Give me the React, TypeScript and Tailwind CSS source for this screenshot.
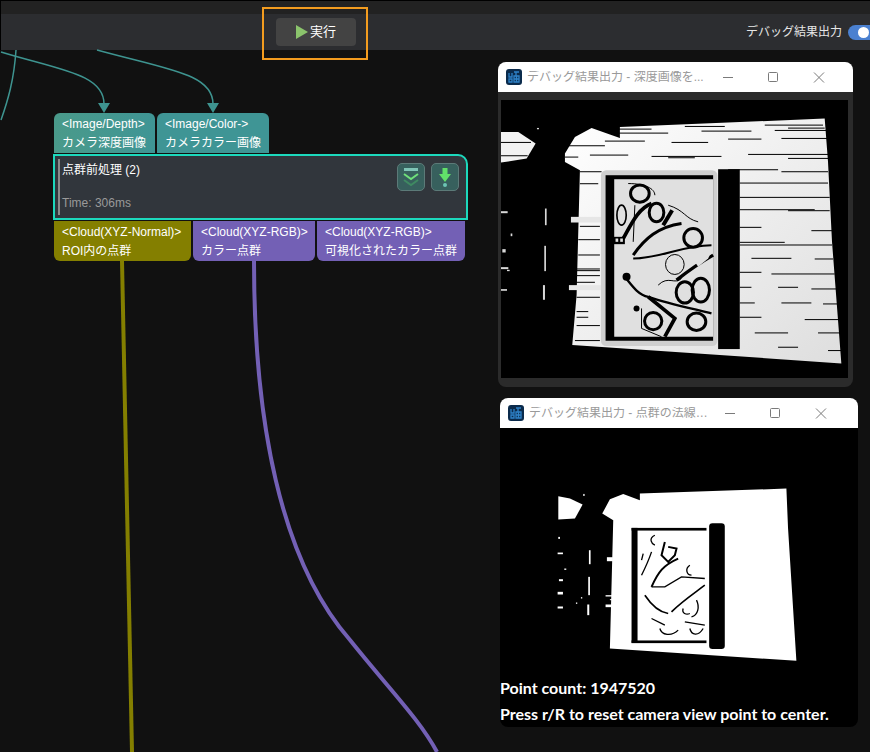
const cjk = "font-['Liberation_Sans','Noto_Sans_CJK_JP',sans-serif]";

// [x1, x2, y] in the crop's own coordinates
const depthLines: number[][] = [
  [372, 470, 100], [570, 690, 92], [810, 985, 88], [880, 990, 97], [372, 520, 112], [620, 770, 106], [840, 995, 104],
  [330, 450, 136], [530, 640, 140], [700, 800, 130], [860, 1000, 128], [210, 330, 150], [285, 400, 178], [470, 680, 182],
  [760, 1000, 176], [210, 250, 184], [520, 600, 186], [880, 1002, 188], [255, 320, 228], [700, 850, 222], [860, 1000, 228],
  [735, 1000, 262], [255, 310, 264], [735, 1005, 305], [735, 960, 342], [880, 1005, 345], [735, 800, 395], [950, 1012, 405],
  [255, 315, 392], [735, 870, 440], [735, 1012, 448], [250, 315, 432], [250, 315, 478], [770, 890, 488], [960, 1015, 490],
  [735, 800, 530], [830, 1020, 535], [245, 315, 520], [245, 315, 540], [735, 770, 575], [850, 910, 575], [950, 1025, 580],
  [245, 315, 605], [735, 780, 622], [860, 950, 622], [985, 1030, 625], [245, 280, 648], [245, 280, 665], [735, 800, 665],
  [930, 1035, 672], [245, 315, 690], [780, 880, 712], [970, 1035, 712], [240, 315, 735], [850, 910, 755], [1000, 1040, 765],
  [220, 315, 525], [222, 300, 560],
];

const specks: number[][] = [
  [18, 348, 20, 6], [47, 415, 5, 8], [22, 462, 10, 10], [18, 516, 22, 6], [36, 524, 8, 4], [18, 582, 18, 5],
  [150, 340, 5, 50], [148, 452, 5, 76], [144, 570, 6, 44], [126, 98, 6, 4],
];

const normalSpecks: number[][] = [
  [190, 425, 5, 6], [188, 472, 16, 5], [208, 520, 6, 4], [192, 552, 12, 6], [188, 590, 16, 8], [188, 634, 16, 6],
  [282, 465, 5, 42], [280, 545, 5, 55], [277, 628, 6, 32], [243, 622, 4, 4], [265, 296, 4, 6], [258, 606, 4, 4],
  [336, 486, 18, 12], [362, 497, 40, 2], [332, 600, 66, 4], [345, 612, 50, 3], [332, 628, 68, 8],
];

function DepthImage() {
  return (
    <svg viewBox="18 15 1042 833" className="block h-[278px] w-[347px] bg-black">
      <defs>
        <linearGradient id="wall" x1="0" y1="0" x2="1" y2="1">
          <stop offset="0" stopColor="#ffffff" />
          <stop offset="1" stopColor="#dedede" />
        </linearGradient>
      </defs>
      <polygon fill="url(#wall)" points="375,95 990,70 1000,200 1012,440 1040,805 232,750 245,600 255,225 210,200 210,175 240,125 290,98 345,118 375,128" />
      <polygon fill="#f2f2f2" points="18,110 70,110 122,145 95,190 18,202" />
      <rect x="18" y="140" width="90" height="3" fill="#000" />
      <rect x="18" y="180" width="80" height="3" fill="#000" />
      <rect x="228" y="365" width="90" height="17" fill="#e6e6e6" />
      <rect x="222" y="570" width="96" height="15" fill="#e6e6e6" />
      <rect x="670" y="222" width="65" height="540" fill="#000" />
      {depthLines.map(([a, b, y]) => (
        <rect key={`${a}-${y}`} x={a} y={y} width={b - a} height="3" fill="#000" />
      ))}
      {specks.map(([x, y, w, h]) => (
        <rect key={`${x}-${y}`} x={x} y={y} width={w} height={h} fill="#d8d8d8" />
      ))}
      <rect x="318" y="225" width="350" height="528" rx="16" fill="#cfcfcf" />
      <rect x="332" y="240" width="323" height="497" fill="#000" />
      <rect x="358" y="252" width="297" height="473" fill="#e0e0e0" />
      <g fill="none" stroke="#000">
        <g strokeWidth="9">
          <ellipse cx="435" cy="295" rx="28" ry="26" />
          <ellipse cx="485" cy="352" rx="22" ry="28" />
          <ellipse cx="595" cy="428" rx="28" ry="28" />
          <ellipse cx="570" cy="592" rx="26" ry="32" />
          <ellipse cx="618" cy="585" rx="26" ry="36" />
          <ellipse cx="475" cy="678" rx="26" ry="26" />
          <ellipse cx="605" cy="680" rx="28" ry="26" />
        </g>
        <ellipse cx="540" cy="508" rx="28" ry="30" strokeWidth="3" />
        <ellipse cx="380" cy="360" rx="14" ry="30" strokeWidth="5" />
        <path strokeWidth="11" d="M385 430 C 410 385 430 340 470 325" />
        <path strokeWidth="12" d="M505 390 L 532 345" />
        <path strokeWidth="9" d="M415 480 C 450 430 490 395 560 385" />
        <path strokeWidth="6" d="M415 490 C 500 490 560 450 650 450" />
        <path strokeWidth="7" d="M390 545 C 410 570 430 600 460 605 C 520 625 590 640 650 655" />
        <path strokeWidth="11" d="M460 605 L 540 670 L 510 725" />
        <path strokeWidth="10" d="M545 555 C 590 520 620 500 655 480" />
        <path strokeWidth="3" d="M400 265 C 450 265 480 280 480 300 M420 330 L 415 440 M520 330 C 570 345 570 370 610 380 M490 570 C 520 540 540 570 560 550 M440 640 L 440 700 L 500 725" />
      </g>
      <circle cx="395" cy="545" r="12" fill="#000" />
      <circle cx="425" cy="640" r="9" fill="#000" />
      <rect x="352" y="425" width="38" height="22" fill="#000" />
      <rect x="362" y="430" width="8" height="10" fill="#e0e0e0" />
      <rect x="376" y="430" width="8" height="10" fill="#e0e0e0" />
      <path d="M600 500 L 650 470 L 640 490 L 610 515 Z" fill="#e0e0e0" />
    </svg>
  );
}

function NormalImage() {
  return (
    <svg viewBox="15 98 1075 899" className="block h-full w-full">
      <polygon fill="#fff" points="435,295 875,280 880,400 905,797 345,760 355,375 322,355 345,312 385,296 435,315" />
      <polygon fill="#fff" points="190,303 225,310 263,328 240,370 190,373" />
      {normalSpecks.map(([x, y, w, h]) => (
        <rect key={`${x}-${y}`} x={x} y={y} width={w} height={h} fill="#fff" />
      ))}
      <rect x="354" y="497" width="58" height="100" fill="#fff" opacity="0" />
      <rect x="643" y="384" width="47" height="378" rx="10" fill="#000" />
      <rect x="410" y="398" width="18" height="345" fill="#000" />
      <rect x="410" y="398" width="225" height="8" fill="#000" />
      <rect x="410" y="736" width="225" height="8" fill="#000" />
      <g fill="none" stroke="#000">
        <path strokeWidth="4" d="M480 420 C 460 430 470 445 480 450 M445 475 L 440 495 M470 470 C 460 500 450 520 440 540" />
        <path strokeWidth="6" d="M470 575 C 490 530 505 510 550 490 M510 440 L 500 480 L 520 500 L 540 480 L 545 460 L 520 455" />
        <path strokeWidth="4" d="M585 510 C 570 520 575 540 590 540 M470 575 L 510 575 L 560 545 L 630 550" />
        <path strokeWidth="5" d="M630 570 C 590 600 560 620 530 650 M450 600 C 470 630 490 650 520 655" />
        <path strokeWidth="4" d="M565 640 C 560 655 575 660 585 655 M605 615 C 615 635 610 660 590 665 M470 670 L 510 690 M495 700 C 500 720 530 725 550 705 M585 700 C 590 720 610 725 625 700 M570 680 L 630 690" />
      </g>
    </svg>
  );
}

function TitleBar({ title, wideGap }: { title: string; wideGap?: boolean }) {
  return (
    <div className="flex h-[30px] shrink-0 items-center rounded-t-[8px] bg-white pl-[8px]">
      <svg viewBox="0 0 16 16" className="h-4 w-4 shrink-0">
        <rect width="16" height="16" rx="3" fill="#0b2b4c" />
        <path d="M3 4v4h3V4M3 10h3v3H3zM8 3h5M10 3v4M8 7h5v6H8zM8 10h5M10.500 7v6" fill="none" stroke="#2f83c9" strokeWidth="1.300" />
      </svg>
      <span className="ml-[5px] w-[180px] truncate text-xs leading-none text-[#9a9a9a]">{title}</span>
      <svg viewBox="0 0 110 12" className={`h-3 w-[110px] shrink-0 ${wideGap ? "ml-[16px]" : "ml-[16px]"}`} fill="none" stroke="#7a7a7a">
        <path d="M0 6.500h10" />
        <rect x="45.500" y="1.500" width="9" height="9" rx="1" />
        <path d="M91 1.500l10 10M101 1.500l-10 10" />
      </svg>
    </div>
  );
}

export default function App() {
  return (
    <div className={`${cjk} relative h-[752px] w-[870px] overflow-hidden bg-[#111111] text-xs text-white`}>
      <div className="h-[14px] border-t border-l border-t-black border-l-black bg-[#222222]" />
      <div className="flex h-9 items-center justify-between border-l border-black bg-[#2c2d30]">
        <div className="ml-[275px] flex h-7 w-20 items-center justify-center gap-[2px] rounded bg-[#434343] text-[13px]">
          <svg viewBox="0 0 12 14" className="h-[14px] w-3"><path d="M0 0l12 7-12 7z" fill="#8bc46c" /></svg>
          <span>実行</span>
        </div>
        <div className="flex items-center gap-[6px] text-[#e6e6e6]">
          <span>デバッグ結果出力</span>
          <div className="h-[15px] w-[22px] rounded-l-full bg-[#4a80d0] pt-[2px] pl-[10px]">
            <div className="h-[11px] w-[11px] rounded-full bg-white" />
          </div>
        </div>
      </div>

      {/* highlight around the run button */}
      <div className="absolute top-[7px] left-[262px] h-[53px] w-[106px] border-2 border-[#f39c1f]" />

      {/* wires */}
      <svg className="absolute top-0 left-0 h-[752px] w-[870px]" viewBox="0 0 870 752" fill="none">
        <path d="M16 50C14 80 8 100 1 120" stroke="#3e9490" strokeWidth="1.500" />
        <path d="M1 52C60 70 104 74 104 104" stroke="#3e9490" strokeWidth="1.500" />
        <path d="M97 50C170 70 213 74 213 104" stroke="#3e9490" strokeWidth="1.500" />
        <path d="M98 103h12l-6 10z" fill="#3e9490" />
        <path d="M207 103h12l-6 10z" fill="#3e9490" />
        <path d="M122 261L132 752" stroke="#847f00" strokeWidth="4" />
        <path d="M254 261C254 420 280 560 350 640C390 690 420 720 437 752" stroke="#7360b5" strokeWidth="4" />
      </svg>

      {/* node */}
      <div className="absolute top-[113px] left-[53px] w-[415px] leading-[19px]">
        <div className="ml-px flex gap-[2px]">
          <div className="h-10 w-[101px] rounded-t-[6px] bg-gradient-to-r from-[#4a9a8a] to-[#3f9595] pt-[2px] pl-2">
            <div>&lt;Image/Depth&gt;</div>
            <div>カメラ深度画像</div>
          </div>
          <div className="h-10 w-[112px] rounded-t-[6px] bg-[#3f9595] pt-[2px] pl-2">
            <div>&lt;Image/Color-&gt;</div>
            <div>カメラカラー画像</div>
          </div>
        </div>
        <div className="mt-px flex h-[66px] justify-between rounded-tr-[10px] border-2 border-[#1cd9bd] bg-[#31363c] py-[3px] pr-[7px] pl-[3px]">
          <div className="flex border-l-2 border-[#8a8a8a] pl-[2px]">
            <div className="flex flex-col justify-between pt-[2px] pb-[2px]">
              <div>点群前処理 (2)</div>
              <div className="text-[#9a9a9a]">Time: 306ms</div>
            </div>
          </div>
          <div className="flex gap-[6px] pt-[4px]">
            <div className="h-7 w-7 rounded-[5px] border border-[#5c7a78] bg-[#37605d]">
              <svg viewBox="0 0 26 26" className="h-[26px] w-[26px]" fill="none">
                <rect x="6" y="4" width="14" height="3" fill="#7fc4b5" />
                <path d="M6 10l7 5 7-5" stroke="#6fe07a" strokeWidth="2" />
                <path d="M6 16l7 5 7-5" stroke="#3f8a62" strokeWidth="2" />
              </svg>
            </div>
            <div className="h-7 w-7 rounded-[5px] border border-[#5c7a78] bg-[#37605d]">
              <svg viewBox="0 0 26 26" className="h-[26px] w-[26px]">
                <path d="M10.500 4h5v6h3.500l-6 8-6-8h3.500z" fill="#62e06a" />
                <circle cx="13" cy="21" r="2" fill="#6cc4b4" />
              </svg>
            </div>
          </div>
        </div>
        <div className="mt-px ml-px flex gap-[2px]">
          <div className="h-10 w-[137px] rounded-b-[6px] bg-[#847f00] pt-[2px] pl-2">
            <div>&lt;Cloud(XYZ-Normal)&gt;</div>
            <div>ROI内の点群</div>
          </div>
          <div className="h-10 w-[122px] rounded-b-[6px] bg-[#7360b5] pt-[2px] pl-2">
            <div>&lt;Cloud(XYZ-RGB)&gt;</div>
            <div>カラー点群</div>
          </div>
          <div className="h-10 w-[148px] rounded-b-[6px] bg-[#7360b5] pt-[2px] pl-2">
            <div>&lt;Cloud(XYZ-RGB)&gt;</div>
            <div>可視化されたカラー点群</div>
          </div>
        </div>
      </div>

      {/* debug windows */}
      <div className="absolute top-[62px] left-[498px] flex h-[325px] w-[355px] flex-col rounded-[8px] bg-[#2b2b2b]">
        <TitleBar title="デバッグ結果出力 - 深度画像を..." />
        <div className="mt-2 ml-[3px]">
          <DepthImage />
        </div>
      </div>

      <div className="absolute top-[398px] left-[500px] flex h-[329px] w-[358px] flex-col rounded-[8px] bg-black">
        <TitleBar title="デバッグ結果出力 - 点群の法線ベ..." />
        <div className="relative flex-1">
          <NormalImage />
          <div className="absolute bottom-0 left-0 font-['Lato',sans-serif] text-base leading-[26px] font-bold">
            <div>Point count: 1947520</div>
            <div>Press r/R to reset camera view point to center.</div>
          </div>
        </div>
      </div>
    </div>
  );
}
